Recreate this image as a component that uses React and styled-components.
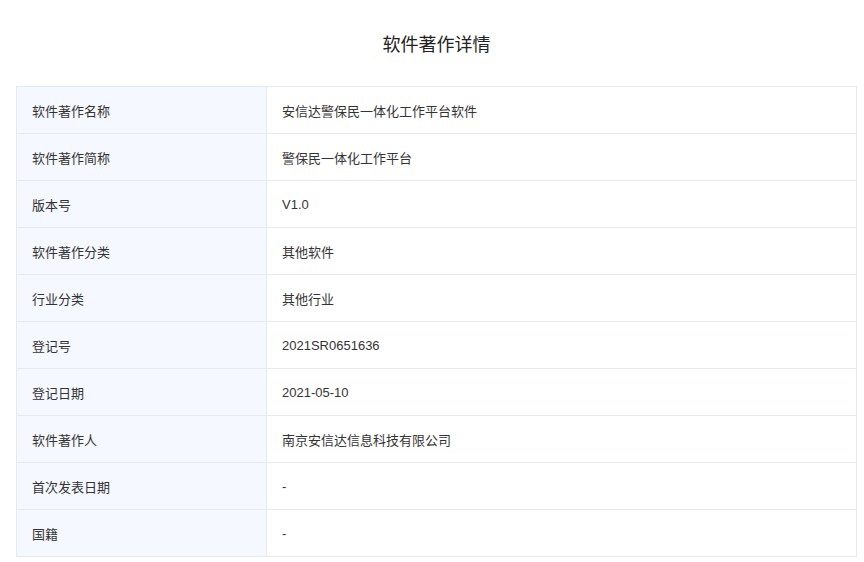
import React from "react";
import styled, { createGlobalStyle } from "styled-components";

const Global = createGlobalStyle`
  body { margin: 0; background: #fff; font-family: "Noto Sans CJK SC", "Liberation Sans", sans-serif; }
`;

const Page = styled.div`
  padding: 0 7px 0 16px;
`;
const Title = styled.h1`
  margin: 0;
  height: 86px;
  display: flex;
  align-items: center;
  justify-content: center;
  font-size: 18px;
  font-weight: 400;
  color: #222;
`;
const Table = styled.div`
  display: grid;
  grid-template-columns: 250px 1fr;
  border-top: 1px solid #e4e9f2;
  border-left: 1px solid #e4e9f2;
`;
const Cell = styled.div`
  height: 46px;
  display: flex;
  align-items: center;
  padding-left: ${p => (p.$label ? 15 : 15)}px;
  font-size: 13px;
  color: #333;
  background: ${p => (p.$label ? "#f5f8fe" : "#fff")};
  border-right: 1px solid #e4e9f2;
  border-bottom: 1px solid #e4e9f2;
  font-family: "Liberation Sans", "Noto Sans CJK SC", sans-serif;
`;

const rows = [
  ["软件著作名称", "安信达警保民一体化工作平台软件"],
  ["软件著作简称", "警保民一体化工作平台"],
  ["版本号", "V1.0"],
  ["软件著作分类", "其他软件"],
  ["行业分类", "其他行业"],
  ["登记号", "2021SR0651636"],
  ["登记日期", "2021-05-10"],
  ["软件著作人", "南京安信达信息科技有限公司"],
  ["首次发表日期", "-"],
  ["国籍", "-"],
];

export default function App() {
  return (
    <Page>
      <Global />
      <Title>软件著作详情</Title>
      <Table>
        {rows.map(([k, v]) => (
          <React.Fragment key={k}>
            <Cell $label>{k}</Cell>
            <Cell>{v}</Cell>
          </React.Fragment>
        ))}
      </Table>
    </Page>
  );
}
